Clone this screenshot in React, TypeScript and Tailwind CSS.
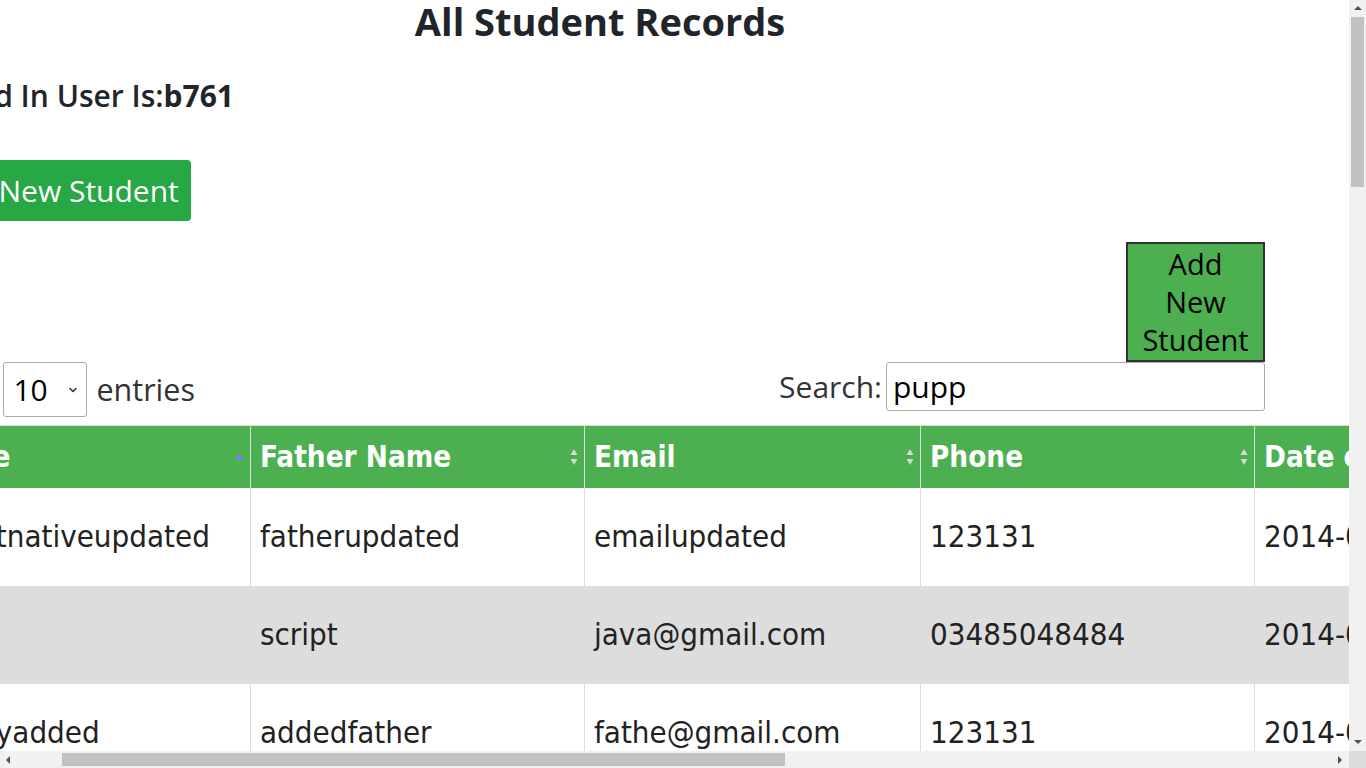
import { ChevronDown } from "lucide-react";

type Student = {
  name: string;
  father: string;
  email: string;
  phone: string;
  dob: string;
  address: string;
};

const students: Student[] = [
  {
    name: "pupptnativeupdated",
    father: "fatherupdated",
    email: "emailupdated",
    phone: "123131",
    dob: "2014-02-11",
    address: "addressupdated",
  },
  {
    name: "pupp",
    father: "script",
    email: "java@gmail.com",
    phone: "03485048484",
    dob: "2014-02-19",
    address: "lahore",
  },
  {
    name: "puppyadded",
    father: "addedfather",
    email: "fathe@gmail.com",
    phone: "123131",
    dob: "2014-03-04",
    address: "islamabad",
  },
];

const columns = ["Name", "Father Name", "Email", "Phone", "Date of Birth", "Address"];

const SortIcon = ({ active }: { active?: boolean }) =>
  active ? (
    <svg width="9" height="8" viewBox="0 0 9 8" className="shrink-0">
      <path d="M4.5 0 L9 7 L0 7 Z" fill="#8080e0" />
    </svg>
  ) : (
    <svg width="8" height="18" viewBox="0 0 8 18" className="shrink-0">
      <path d="M4 1 L7.5 7 L0.5 7 Z" fill="#d6d6d6" />
      <path d="M4 17 L7.5 11 L0.5 11 Z" fill="#d6d6d6" />
    </svg>
  );

const Triangle = ({ dir }: { dir: "up" | "down" | "left" | "right" }) => {
  const d = {
    up: "M4 1 L8 5 L0 5 Z",
    down: "M0 1 L8 1 L4 5 Z",
    left: "M5 0 L5 8 L1 4 Z",
    right: "M1 0 L5 4 L1 8 Z",
  }[dir];
  return (
    <svg width="8" height="8" viewBox="0 0 8 8">
      <path d={d} fill="#505050" />
    </svg>
  );
};

const App = () => {
  return (
    <div className="flex h-screen w-screen flex-col overflow-hidden bg-white">
      <div className="flex min-h-0 flex-1">
        <div className="min-w-0 flex-1 overflow-hidden">
          <div className="-ml-[85px] w-[2200px] font-['Open_Sans',sans-serif] text-[#212529]">
            <div className="w-[1370px] text-center">
              <h2 className="text-[38px] leading-[43px] font-bold">All Student Records</h2>
            </div>

            <h4 className="mt-[33px] -ml-[6px] text-[30px] leading-[40px] font-semibold">
              Logged In User Is:<b className="font-bold">b761</b>
            </h4>

            <button className="mt-[44px] ml-[8px] rounded-[4px] bg-[#28a745] px-[12px] py-[9px] text-[30px] leading-[43px] text-white">
              Add New Student
            </button>

            <div className="flex w-[1350px] justify-end pt-[21px]">
              <button className="flex w-[139px] flex-col items-center border-2 border-[#333] bg-[#4CAF50] py-[1px] text-[29px] leading-[38px] text-black">
                <span>Add</span>
                <span>New</span>
                <span>Student</span>
              </button>
            </div>

            <div className="flex w-[1350px] items-start justify-between">
              <div className="flex items-center gap-[9px] text-[30.5px] font-medium text-[#333]">
                <span>Show</span>
                <div className="relative ml-[2px]">
                  <select className="h-[55px] w-[84px] appearance-none rounded-[3px] border border-[#aaa] bg-white pl-[9px] text-[30px] font-normal text-black">
                    <option>10</option>
                  </select>
                  <ChevronDown className="pointer-events-none absolute top-[22px] right-[8px] size-[12px]" strokeWidth={3} />
                </div>
                <span>entries</span>
              </div>
              <label className="flex items-center gap-[4px] text-[30px] font-medium text-[#333]">
                Search:
                <input
                  className="h-[49px] w-[379px] rounded-[3px] border border-[#aaa] px-[6px] text-[30px] font-normal text-black"
                  defaultValue="pupp"
                />
              </label>
            </div>

            <table className="mt-[8px] w-[2000px] table-fixed border-collapse border-t border-[#ddd] font-['DejaVu_Sans_Condensed','DejaVu_Sans',sans-serif] text-[31px] text-[#222]">
              <colgroup>
                <col className="w-[335px]" />
                <col className="w-[334px]" />
                <col className="w-[336px]" />
                <col className="w-[334px]" />
                <col className="w-[334px]" />
                <col className="w-[327px]" />
              </colgroup>
              <thead>
                <tr className="h-[62px] bg-[#4CAF50] text-[29.4px] text-white">
                  {columns.map((c, i) => (
                    <th key={c} className="border-x border-[#ddd] pr-[6px] pl-[9px] text-left font-bold">
                      <div className="flex items-center justify-between">
                        <span>{c}</span>
                        <SortIcon active={i === 0} />
                      </div>
                    </th>
                  ))}
                </tr>
              </thead>
              <tbody>
                {students.map((s, i) => (
                  <tr key={s.name} className={i % 2 === 1 ? "h-[98px] bg-[#ddd]" : "h-[98px] bg-white"}>
                    {[s.name, s.father, s.email, s.phone, s.dob, s.address].map((v, j) => (
                      <td key={j} className="border-x border-[#ddd] px-[9px]">
                        {v}
                      </td>
                    ))}
                  </tr>
                ))}
              </tbody>
            </table>
          </div>
        </div>

        <div className="flex w-[17px] flex-col items-center bg-[#f1f1f1]">
          <div className="flex h-[17px] items-center justify-center">
            <Triangle dir="up" />
          </div>
          <div className="h-[170px] w-[13px] bg-[#c1c1c1]" />
          <div className="flex-1" />
          <div className="flex h-[17px] items-center justify-center">
            <Triangle dir="down" />
          </div>
        </div>
      </div>

      <div className="flex h-[17px]">
        <div className="flex flex-1 items-center bg-[#f1f1f1]">
          <div className="flex w-[17px] justify-center">
            <Triangle dir="left" />
          </div>
          <div className="ml-[45px] h-[13px] w-[723px] bg-[#c1c1c1]" />
          <div className="flex-1" />
          <div className="flex w-[17px] justify-center">
            <Triangle dir="right" />
          </div>
        </div>
        <div className="w-[17px] bg-[#dcdcdc]" />
      </div>
    </div>
  );
};

export default App;
